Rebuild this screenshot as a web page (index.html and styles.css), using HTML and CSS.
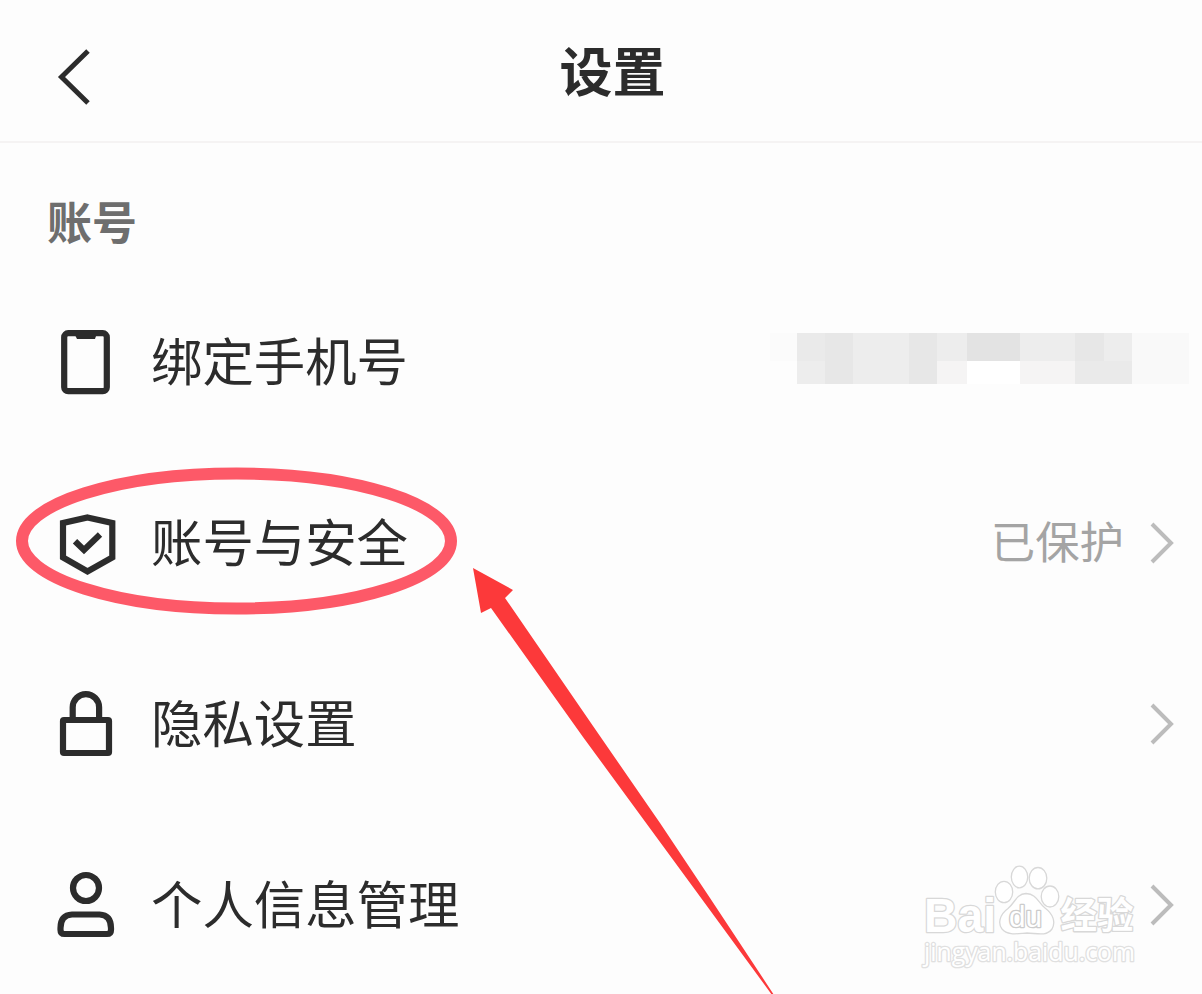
FILE: index.html
```html
<!DOCTYPE html>
<html lang="zh-CN">
<head>
    <meta charset="UTF-8">
    <meta name="viewport" content="width=device-width, initial-scale=1.0">
    <title>设置</title>
    <link rel="stylesheet" href="styles.css">
</head>
<body>
    <div class="screen">
        <header class="header">
            <svg class="back" viewBox="0 0 40 60">
                <path d="M32 6L5.500 32L32 58"/>
            </svg>
            <h1 class="title">设置</h1>
        </header>

        <h2 class="section-title">账号</h2>

        <ul class="list">
            <li class="row">
                <svg class="icon" viewBox="0 0 64 73">
                    <rect x="10.2" y="8.2" width="42.6" height="58" rx="4"/>
                    <path class="solid" d="M20 8H43L41 14H23Z"/>
                </svg>
                <span class="label">绑定手机号</span>
                <!-- hidden phone number -->
                <div class="mosaic">
                    <i class="g1"></i><i class="g5"></i><i class="g6"></i><i class="g4"></i><i class="g6"></i><i class="g4"></i><i class="g7"></i><i class="g4"></i><i class="g6"></i><i class="g4"></i><i class="g2"></i>
                    <i></i><i class="g4"></i><i class="g6"></i><i class="g4"></i><i class="g6"></i><i class="g3"></i><i class="g0"></i><i class="g3"></i><i class="g5"></i><i class="g5"></i><i class="g2"></i>
                </div>
            </li>
            <li class="row">
                <svg class="icon" viewBox="0 0 64 73">
                    <path d="M33.5 11.5L58.3 17V51.5L33.5 65.5L9 51.5V17Z"/>
                    <path d="M21 35.2L30 44L46 28.5"/>
                </svg>
                <span class="label">账号与安全</span>
                <span class="status">已保护</span>
                <svg class="arrow" viewBox="0 0 26 44"><path d="M3 3L22 22L3 41"/></svg>
            </li>
            <li class="row">
                <svg class="icon" viewBox="0 0 64 73">
                    <rect x="9" y="33" width="46" height="33" rx="1"/>
                    <path d="M18.7 33V20.3A13.2 13.2 0 0 1 45.1 20.3V33"/>
                </svg>
                <span class="label">隐私设置</span>
                <svg class="arrow" viewBox="0 0 26 44"><path d="M3 3L22 22L3 41"/></svg>
            </li>
            <li class="row">
                <svg class="icon" viewBox="0 0 64 73">
                    <circle cx="32" cy="20" r="13"/>
                    <path d="M18 46.5H45.5Q57 47 57 60V62Q57 66 53 66H10.5Q6.5 66 6.5 62V60Q6.5 47 18 46.5Z"/>
                </svg>
                <span class="label">个人信息管理</span>
                <svg class="arrow" viewBox="0 0 26 44"><path d="M3 3L22 22L3 41"/></svg>
            </li>
        </ul>

        <!-- marks on top of the list -->
        <svg class="marks" viewBox="0 0 1202 994">
            <ellipse class="ring" cx="236.5" cy="541" rx="214.5" ry="67.5"/>
            <path class="pointer" d="M473 568L513 590L505 598L593 726L660 823L710 898L774 995H772L693 887L583 737L491 608L481 613Z"/>
        </svg>

        <svg class="watermark" viewBox="0 0 230 120">
            <text class="brand" x="12" y="71.500" textLength="72" lengthAdjust="spacingAndGlyphs">Bai</text>
            <ellipse cx="92" cy="32" rx="8.700" ry="10.700"/>
            <ellipse cx="107.500" cy="17" rx="8.200" ry="10.900"/>
            <ellipse cx="126" cy="18.200" rx="8.800" ry="10.700"/>
            <ellipse cx="138" cy="36.500" rx="8.800" ry="10.500"/>
            <path d="M114 33.500C104 34 103 43 96 48.500C87 55 86 64 90 69C96 76 106 73.500 115 73C124 73 134 77 140 69C144 62 141 54 133 48C126 43 125 34 114 33.500Z"/>
            <text class="du" x="97" y="67" textLength="33" lengthAdjust="spacingAndGlyphs">du</text>
            <text class="brand-cn" x="148.500" y="69" textLength="73" lengthAdjust="spacingAndGlyphs">经验</text>
            <text class="url" x="12" y="101" textLength="211" lengthAdjust="spacingAndGlyphs">jingyan.baidu.com</text>
        </svg>
    </div>
</body>
</html>
```

FILE: styles.css
```css
* {
    margin: 0;
    padding: 0;
    box-sizing: border-box;
}

body {
    background-color: #fdfdfd;
    color: #2c2c2c;
    font-family: "Noto Sans CJK SC", sans-serif;
    overflow: hidden;
}

.screen {
    position: relative;
    height: 994px;
    overflow: hidden;
}

.header {
    display: flex;
    align-items: center;
    height: 143px;
    padding-left: 56px;
    border-bottom: 2px solid #f5f3f3;
}

.back {
    width: 40px;
    height: 60px;
    margin-top: 8px;
    fill: none;
    stroke: #2c2c2c;
    stroke-width: 5;
    overflow: visible;
}

.title {
    flex: 1;
    padding: 0 73px 4px 0;
    text-align: center;
    font-size: 53px;
    line-height: 60px;
}

.section-title {
    height: 128px;
    padding: 47px 0 0 47px;
    font-size: 45px;
    line-height: 62px;
    color: #6e6e6e;
}

.list {
    list-style: none;
}

.row {
    display: flex;
    align-items: center;
    height: 181px;
    padding: 0 27px 0 54px;
}

.icon {
    width: 64px;
    height: 73px;
    fill: none;
    stroke: #2c2c2c;
    stroke-width: 6.2;
}

.icon .solid {
    fill: #2c2c2c;
    stroke: none;
}

.label {
    flex: 1;
    padding: 0 0 6px 33px;
    font-size: 51.4px;
    line-height: 70px;
}

.status {
    margin-right: 25px;
    padding-bottom: 6px;
    font-size: 44.4px;
    line-height: 60px;
    color: #a4a4a4;
}

.arrow {
    width: 26px;
    height: 44px;
    fill: none;
    stroke: #bcbcbc;
    stroke-width: 4;
}

.mosaic {
    display: grid;
    grid-template-columns: 27px 28px 28px 56px 28px 30px 53px 55px 29px 28px 57px;
    grid-template-rows: 28px 23px;
    margin: 0 -14px 6px 0;
}

.g0 { background-color: #ffffff; }
.g1 { background-color: #fbfbfb; }
.g2 { background-color: #f9f9f9; }
.g3 { background-color: #f5f4f4; }
.g4 { background-color: #ededed; }
.g5 { background-color: #eaeaea; }
.g6 { background-color: #e7e7e7; }
.g7 { background-color: #e3e3e3; }

.marks {
    position: absolute;
    top: 0;
    left: 0;
    width: 1202px;
    height: 994px;
}

.ring {
    fill: none;
    stroke: #fd5968;
    stroke-width: 12;
}

.pointer {
    fill: #fc393a;
}

.watermark {
    position: absolute;
    left: 912px;
    top: 860px;
    width: 230px;
    height: 120px;
    fill: #ffffff;
    stroke: #d8d8d8;
    stroke-width: 1.3;
}

.watermark text {
    paint-order: stroke;
    stroke-width: 2.6;
    stroke-linejoin: round;
}

.brand {
    font: bold 48px "Liberation Sans", sans-serif;
}

.watermark .du {
    font: 29px "Liberation Sans", sans-serif;
    stroke: #cccccc;
}

.brand-cn {
    font: bold 37px "Noto Sans CJK SC", sans-serif;
}

.watermark .url {
    font: 25px "Open Sans", sans-serif;
    stroke: #e0e0e0;
}
```
